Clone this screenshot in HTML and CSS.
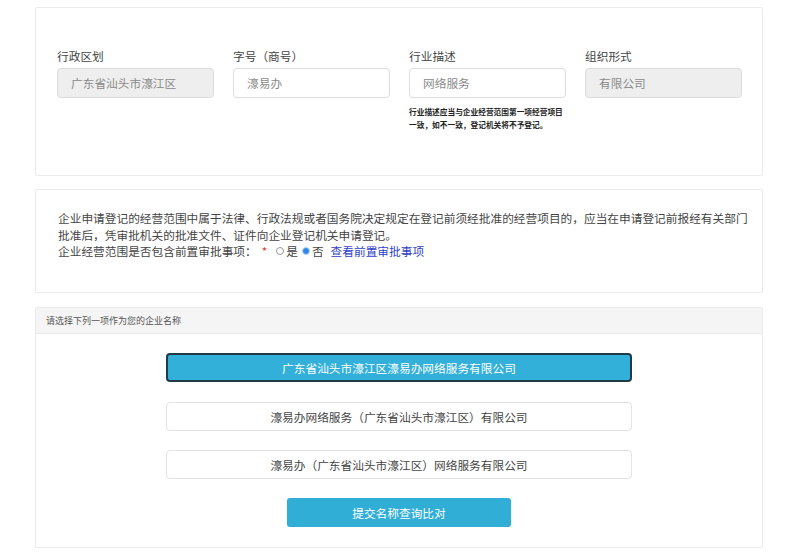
FILE: index.html
```html
<!DOCTYPE html>
<html>
    <head>
        <meta charset="utf-8">
        <title>企业名称申报</title>
        <link rel="stylesheet" href="styles.css">
    </head>
    <body>
        <div class="page">
            <div class="panel panel-fields">
                <div class="fields">
                    <div class="field">
                        <label>行政区划</label>
                        <div class="input disabled">广东省汕头市濠江区</div>
                    </div>
                    <div class="field">
                        <label>字号（商号）</label>
                        <div class="input">濠易办</div>
                    </div>
                    <div class="field">
                        <label>行业描述</label>
                        <div class="input">网络服务</div>
                        <p class="hint">行业描述应当与企业经营范围第一项经营项目一致，如不一致，登记机关将不予登记。</p>
                    </div>
                    <div class="field">
                        <label>组织形式</label>
                        <div class="input disabled">有限公司</div>
                    </div>
                </div>
            </div>

            <div class="panel panel-notice">
                <p class="notice">企业申请登记的经营范围中属于法律、行政法规或者国务院决定规定在登记前须经批准的经营项目的，应当在申请登记前报经有关部门批准后，凭审批机关的批准文件、证件向企业登记机关申请登记。</p>
                <div class="question">
                    企业经营范围是否包含前置审批事项：
                    <span class="required">*</span>
                    <span class="radio"></span>是
                    <span class="radio checked"></span>否
                    <a class="link" href="#">查看前置审批事项</a>
                </div>
            </div>

            <div class="panel panel-names">
                <div class="names-header">请选择下列一项作为您的企业名称</div>
                <div class="names-body">
                    <div class="option selected">广东省汕头市濠江区濠易办网络服务有限公司</div>
                    <div class="option">濠易办网络服务（广东省汕头市濠江区）有限公司</div>
                    <div class="option">濠易办（广东省汕头市濠江区）网络服务有限公司</div>
                    <div class="submit">提交名称查询比对</div>
                </div>
            </div>
        </div>
    </body>
</html>
```

FILE: styles.css
```css
body, html {
    height: 100%;
}
body {
    margin: 0;
    padding: 7px 0 0 0;
    background: #fff;
    font-family: "Noto Sans CJK SC", "Noto Sans", sans-serif;
    font-size: 11.7px;
    color: #444;
    box-sizing: border-box;
    overflow: hidden;
}

.page {
    width: 728px;
    margin-left: 35px;
}

.panel {
    border: 1px solid #ebebeb;
    border-radius: 2px;
    box-sizing: border-box;
    background: #fff;
}

/* fields */
.panel-fields {
    height: 169px;
    padding: 40px 0 0 21px;
}
.fields {
    display: flex;
    gap: 19px;
}
.field {
    width: 157px;
}
.field label {
    display: block;
    line-height: 16px;
    height: 16px;
    color: #444;
    margin-bottom: 4px;
}
.input {
    height: 30px;
    line-height: 28px;
    box-sizing: border-box;
    border: 1px solid #dcdcdc;
    border-radius: 4px;
    padding-left: 13px;
    color: #8a8a8a;
    background: #fff;
}
.input.disabled {
    background: #eeeeee;
}
.hint {
    margin: 7px 0 0 0;
    font-size: 7.7px;
    line-height: 13px;
    font-weight: bold;
    color: #222;
}

/* notice */
.panel-notice {
    margin-top: 13px;
    height: 104px;
    padding: 20px 0 0 22px;
    line-height: 16.5px;
}
.notice {
    margin: 0;
    width: 700px;
}
.question {
    display: flex;
    align-items: center;
}
.required {
    color: #e33;
    margin: 0 7px 0 5px;
}
.radio {
    display: inline-block;
    width: 8px;
    height: 8px;
    box-sizing: border-box;
    border: 1px solid #999;
    border-radius: 50%;
    margin: 0 2px 0 2px;
}
.radio.checked {
    border: 1px solid #b9d7f5;
    background: #2f86e8;
    margin-left: 4px;
}
.link {
    color: #2f3fc8;
    text-decoration: none;
    margin-left: 7px;
}

/* names */
.panel-names {
    margin-top: 14px;
    height: 241px;
}
.names-header {
    height: 26px;
    line-height: 25px;
    background: #f5f5f5;
    border-bottom: 1px solid #ebebeb;
    box-sizing: border-box;
    padding-left: 10px;
    font-size: 9px;
    color: #555;
}
.names-body {
    display: flex;
    flex-direction: column;
    align-items: center;
    gap: 19px;
    padding-top: 19px;
}
.option {
    width: 466px;
    height: 29px;
    line-height: 27px;
    box-sizing: border-box;
    border: 1px solid #e3e3e3;
    border-radius: 4px;
    text-align: center;
    color: #444;
}
.option.selected {
    background: #32b0d9;
    border: 2px solid #1f3b48;
    line-height: 25px;
    color: #fff;
    margin-bottom: 1px;
}
.submit {
    width: 224px;
    height: 29px;
    line-height: 29px;
    border-radius: 3px;
    background: #31aed6;
    color: #fff;
    text-align: center;
}
```
